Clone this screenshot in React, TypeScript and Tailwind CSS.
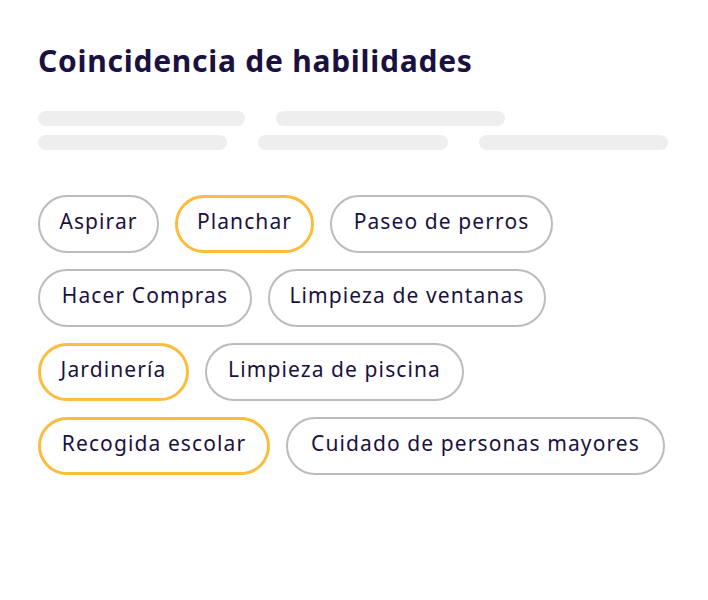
import React from "react";

const chips: { label: string; w: string; on?: boolean }[][] = [
  [
    { label: "Aspirar", w: "w-[121px]" },
    { label: "Planchar", w: "w-[139px]", on: true },
    { label: "Paseo de perros", w: "w-[223px]" },
  ],
  [
    { label: "Hacer Compras", w: "w-[214px]" },
    { label: "Limpieza de ventanas", w: "w-[278px]" },
  ],
  [
    { label: "Jardinería", w: "w-[151px]", on: true },
    { label: "Limpieza de piscina", w: "w-[259px]" },
  ],
  [
    { label: "Recogida escolar", w: "w-[232px]", on: true },
    { label: "Cuidado de personas mayores", w: "w-[379px]" },
  ],
];

export default function App() {
  return (
    <div
      className="w-[708px] h-[600px] bg-white px-[38px] pt-[41px] text-[#1b1140]"
      style={{ fontFamily: "'Noto Sans', Lato, sans-serif" }}
    >
      <h1 className="text-[30px] leading-[40px] font-bold tracking-[0.75px]">
        Coincidencia de habilidades
      </h1>
      <div className="mt-[30px] flex flex-col gap-[9px]">
        <div className="flex gap-[31px]">
          <div className="h-[15px] w-[207px] rounded-full bg-[#eeeeee]" />
          <div className="h-[15px] w-[229px] rounded-full bg-[#eeeeee]" />
        </div>
        <div className="flex gap-[31px] w-[630px]">
          <div className="h-[15px] flex-1 rounded-full bg-[#eeeeee]" />
          <div className="h-[15px] flex-1 rounded-full bg-[#eeeeee]" />
          <div className="h-[15px] flex-1 rounded-full bg-[#eeeeee]" />
        </div>
      </div>
      <div className="mt-[45px] flex flex-col gap-[16px]">
        {chips.map((row, i) => (
          <div key={i} className="flex gap-[16px]">
            {row.map((c) => (
              <div
                key={c.label}
                className={
                  c.on
                    ? `${c.w} h-[58px] pb-[5px] rounded-full border-[3px] border-[#fbbd3b] flex items-center justify-center text-[21px] tracking-[1.1px]`
                    : `${c.w} h-[58px] pb-[5px] rounded-full border-2 border-[#bcbcbc] flex items-center justify-center text-[21px] tracking-[1.1px]`
                }
              >
                {c.label}
              </div>
            ))}
          </div>
        ))}
      </div>
    </div>
  );
}
